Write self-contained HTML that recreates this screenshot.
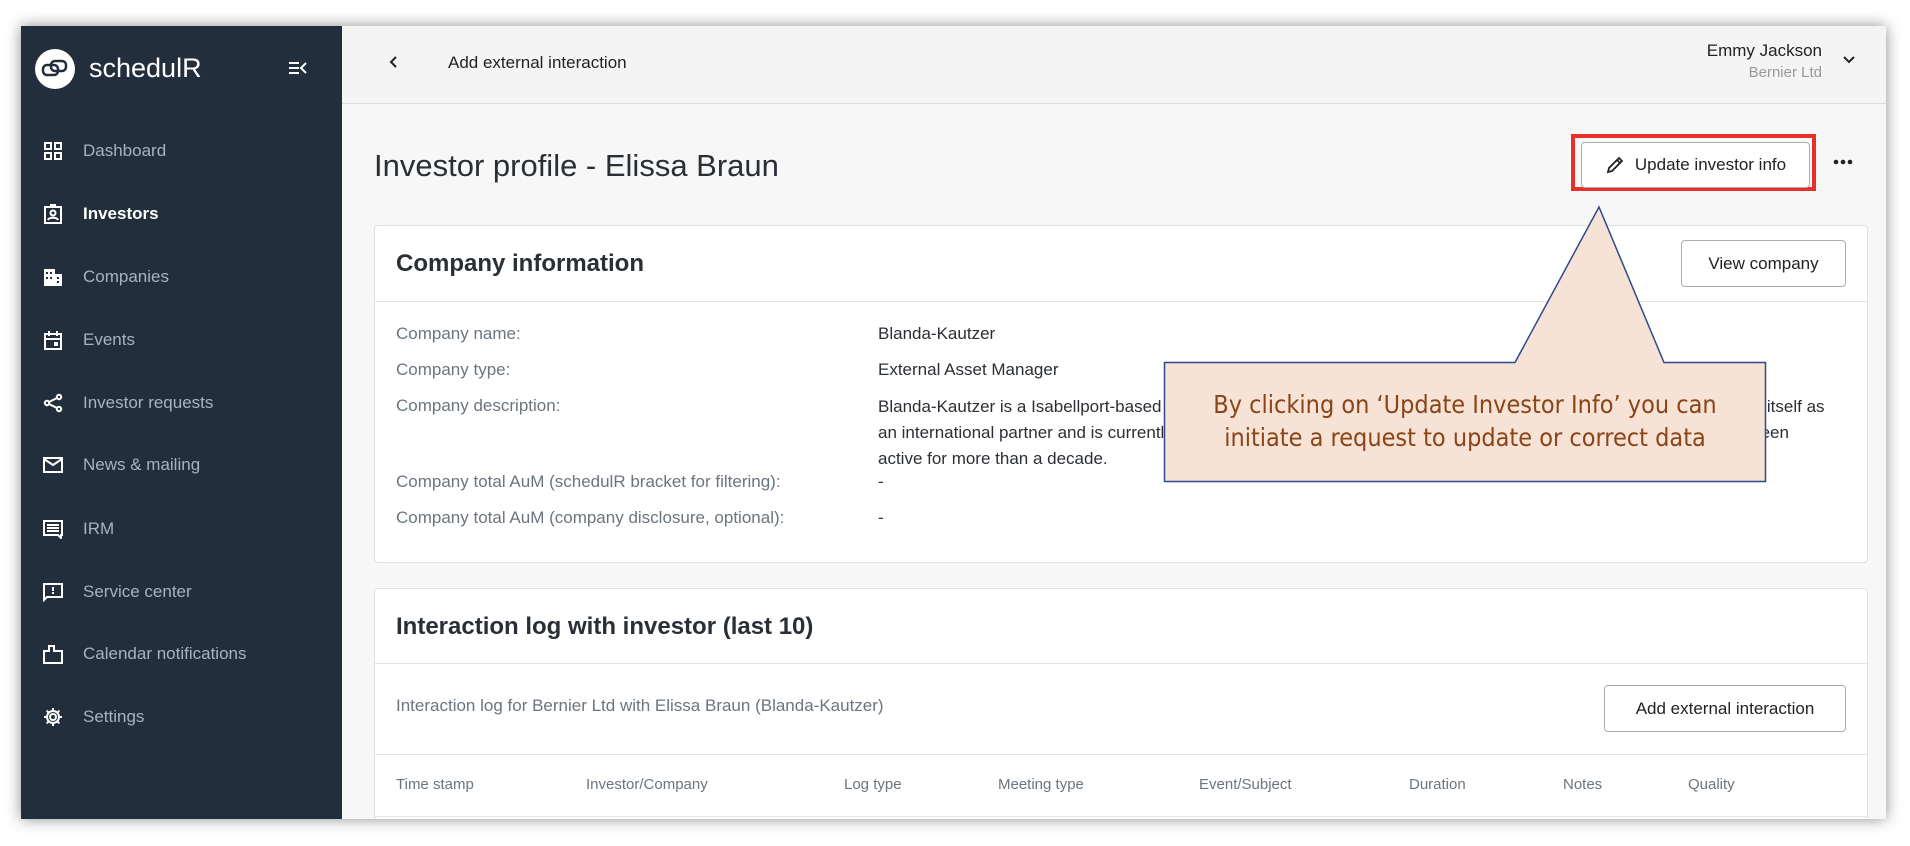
<!DOCTYPE html>
<html><head><meta charset="utf-8"><style>
*{box-sizing:border-box;margin:0;padding:0}
body{width:1910px;height:846px;background:#fff;font-family:"Liberation Sans",sans-serif;position:relative;overflow:hidden}
.win{position:absolute;left:21px;top:26px;width:1865px;height:793px;background:#f7f7f7;box-shadow:0 0 14px rgba(0,0,0,.45);overflow:hidden}
.side{position:absolute;left:0;top:0;width:321px;height:793px;background:#222e3c}
.a{position:absolute}
.mi{position:absolute;left:62px;font-size:17px;color:#a9b2bd}
.ic{position:absolute;left:22px;width:20px;height:20px}
.hdr{position:absolute;left:321px;top:0;right:0;height:78px;background:#f4f4f4;border-bottom:1px solid #dcdce0}
.card{position:absolute;background:#fff;border:1px solid #dfe1e4;border-radius:4px}
.lbl{position:absolute;left:21px;font-size:17px;color:#6c757d}
.val{position:absolute;left:503px;font-size:17px;color:#2b2f33}
.btn{position:absolute;border:1px solid #a9adb3;border-radius:4px;background:#fff;font-size:17px;color:#222;display:flex;align-items:center;justify-content:center}
.th{position:absolute;top:187px;font-size:15px;color:#6c757d}
</style></head><body>
<div class="win">
 <div class="side">
  <div class="a" style="left:14px;top:23px;width:40px;height:40px;border-radius:50%;background:#fff"></div>
  <svg class="a" style="left:20px;top:32px" width="28" height="22" viewBox="0 0 28 22"><rect x="2" y="7" width="15" height="10" rx="4" fill="none" stroke="#222e3c" stroke-width="2.5"/><rect x="10" y="3" width="15" height="10" rx="4" fill="none" stroke="#222e3c" stroke-width="2.5"/></svg>
  <div class="a" style="left:68px;top:27px;font-size:27px;color:#fff;">schedulR</div>
  <svg class="a" style="left:267px;top:34px" width="20" height="16" viewBox="0 0 20 16"><path d="M1 3h10M1 8h10M1 13h10M18 3l-5 5 5 5" stroke="#fff" stroke-width="2" fill="none"/></svg>
  <svg class="ic" style="top:115px" viewBox="0 0 20 20"><g fill="none" stroke="#fff" stroke-width="2"><rect x="2" y="2" width="6" height="6"/><rect x="12" y="2" width="6" height="6"/><rect x="2" y="12" width="6" height="6"/><rect x="12" y="12" width="6" height="6"/></g></svg>
  <div class="mi" style="top:115px">Dashboard</div>
  <svg class="ic" style="top:178px" viewBox="0 0 20 20"><g fill="none" stroke="#fff" stroke-width="2"><rect x="2" y="3" width="16" height="16"/><circle cx="10" cy="9" r="2.5"/><path d="M5 16c1-3 9-3 10 0M7 1h6"/></g></svg>
  <div class="mi" style="top:178px;color:#fff;font-weight:bold">Investors</div>
  <svg class="ic" style="top:241px" viewBox="0 0 20 20"><g fill="#fff"><rect x="1" y="2" width="11" height="17"/><rect x="12" y="7" width="7" height="12"/></g><g fill="#222e3c"><rect x="3" y="5" width="2" height="2"/><rect x="7" y="5" width="2" height="2"/><rect x="3" y="10" width="2" height="2"/><rect x="7" y="10" width="2" height="2"/><rect x="14" y="10" width="2" height="2"/><rect x="14" y="14" width="2" height="2"/></g></svg>
  <div class="mi" style="top:241px">Companies</div>
  <svg class="ic" style="top:304px" viewBox="0 0 20 20"><g fill="none" stroke="#fff" stroke-width="2"><rect x="2" y="4" width="16" height="15"/><path d="M6 1v5M14 1v5M2 9h16"/></g><rect x="11" y="12" width="4" height="4" fill="#fff"/></svg>
  <div class="mi" style="top:304px">Events</div>
  <svg class="ic" style="top:367px" viewBox="0 0 20 20"><g fill="none" stroke="#fff" stroke-width="2"><circle cx="16" cy="4" r="2.2"/><circle cx="4" cy="10" r="2.2"/><circle cx="16" cy="16" r="2.2"/><path d="M6 9l8-4M6 11l8 4"/></g></svg>
  <div class="mi" style="top:367px">Investor requests</div>
  <svg class="ic" style="top:429px" viewBox="0 0 20 20"><g fill="none" stroke="#fff" stroke-width="2"><rect x="1" y="3" width="18" height="14"/><path d="M1 4l9 6 9-6"/></g></svg>
  <div class="mi" style="top:429px">News &amp; mailing</div>
  <svg class="ic" style="top:493px" viewBox="0 0 20 20"><g fill="none" stroke="#fff" stroke-width="2"><path d="M1 2h18v14h-1v3l-3-3H1z"/><path d="M4 6h12M4 9h12M4 12h12"/></g></svg>
  <div class="mi" style="top:493px">IRM</div>
  <svg class="ic" style="top:556px" viewBox="0 0 20 20"><g fill="none" stroke="#fff" stroke-width="2"><path d="M1 2h18v13H4l-3 3z"/></g><rect x="9" y="5" width="2" height="4" fill="#fff"/><rect x="9" y="10" width="2" height="2" fill="#fff"/></svg>
  <div class="mi" style="top:556px">Service center</div>
  <svg class="ic" style="top:618px" viewBox="0 0 20 20"><g fill="none" stroke="#fff" stroke-width="2"><path d="M1 19V7h5V2h5v5h8v12z"/></g></svg>
  <div class="mi" style="top:618px">Calendar notifications</div>
  <svg class="ic" style="top:681px" viewBox="0 0 20 20"><g fill="none" stroke="#fff" stroke-width="2"><circle cx="10" cy="10" r="3"/><path d="M10 1v3M10 16v3M1 10h3M16 10h3M3.6 3.6l2.1 2.1M14.3 14.3l2.1 2.1M3.6 16.4l2.1-2.1M14.3 5.7l2.1-2.1"/><circle cx="10" cy="10" r="6"/></g></svg>
  <div class="mi" style="top:681px">Settings</div>
 </div>
 <div class="hdr">
  <svg class="a" style="left:46px;top:29px" width="12" height="14" viewBox="0 0 12 14"><path d="M8 2L3 7l5 5" stroke="#222" stroke-width="2" fill="none"/></svg>
  <div class="a" style="left:106px;top:27px;font-size:17px;color:#222">Add external interaction</div>
  <div class="a" style="right:64px;top:15px;font-size:17px;color:#222">Emmy Jackson</div>
  <div class="a" style="right:64px;top:38px;font-size:15px;color:#999">Bernier Ltd</div>
  <svg class="a" style="right:30px;top:29px" width="14" height="10" viewBox="0 0 14 10"><path d="M2 2l5 5 5-5" stroke="#222" stroke-width="2" fill="none"/></svg>
 </div>
 <div class="a" style="left:353px;top:122px;font-size:31px;color:#2a2f35">Investor profile - Elissa Braun</div>
 <div class="a" style="left:1550px;top:108px;width:245px;height:57px;border:4px solid #e8302a"></div>
 <div class="btn" style="left:1560px;top:116px;width:229px;height:46px"><svg width="20" height="20" viewBox="0 0 20 20" style="margin-right:10px"><path d="M3 17l1-4L14 3l3 3L7 16zM12 5l3 3" stroke="#222" stroke-width="1.8" fill="none"/></svg>Update investor info</div>
 <svg class="a" style="left:1812px;top:132px" width="20" height="8" viewBox="0 0 20 8"><circle cx="3" cy="4" r="2.3" fill="#222"/><circle cx="10" cy="4" r="2.3" fill="#222"/><circle cx="17" cy="4" r="2.3" fill="#222"/></svg>
 <div class="card" style="left:353px;top:199px;width:1494px;height:338px">
  <div class="a" style="left:21px;top:24px;font-size:24px;color:#2a2f35;font-weight:bold">Company information</div>
  <div class="btn" style="left:1306px;top:14px;width:165px;height:47px">View company</div>
  <div class="a" style="left:0;right:0;top:75px;border-top:1px solid #e3e5e8"></div>
  <div class="lbl" style="top:98px">Company name:</div><div class="val" style="top:98px">Blanda-Kautzer</div>
  <div class="lbl" style="top:134px">Company type:</div><div class="val" style="top:134px">External Asset Manager</div>
  <div class="lbl" style="top:170px">Company description:</div>
  <div class="val" style="top:168px;line-height:26px;width:960px">Blanda-Kautzer is a Isabellport-based asset manager with a focus on renewable energy investors. The company sees itself as an international partner and is currently invested in one or more projects, for example in the North Sea, where it has been active for more than a decade.</div>
  <div class="lbl" style="top:246px">Company total AuM (schedulR bracket for filtering):</div><div class="val" style="top:246px">-</div>
  <div class="lbl" style="top:282px">Company total AuM (company disclosure, optional):</div><div class="val" style="top:282px">-</div>
 </div>
 <div class="card" style="left:353px;top:562px;width:1494px;height:260px">
  <div class="a" style="left:21px;top:24px;font-size:24px;color:#2a2f35;font-weight:bold">Interaction log with investor (last 10)</div>
  <div class="a" style="left:0;right:0;top:74px;border-top:1px solid #e3e5e8"></div>
  <div class="a" style="left:21px;top:107px;font-size:17px;color:#6c757d">Interaction log for Bernier Ltd with Elissa Braun (Blanda-Kautzer)</div>
  <div class="btn" style="left:1229px;top:96px;width:242px;height:47px">Add external interaction</div>
  <div class="a" style="left:0;right:0;top:165px;border-top:1px solid #e3e5e8"></div>
  <div class="th" style="left:21px">Time stamp</div><div class="th" style="left:211px">Investor/Company</div><div class="th" style="left:469px">Log type</div><div class="th" style="left:623px">Meeting type</div><div class="th" style="left:824px">Event/Subject</div><div class="th" style="left:1034px">Duration</div><div class="th" style="left:1188px">Notes</div><div class="th" style="left:1313px">Quality</div>
  <div class="a" style="left:0;right:0;top:227px;border-top:1px solid #e3e5e8"></div>
 </div>
</div>
<svg class="a" style="left:0;top:0" width="1910" height="846">
 <path d="M1164.5 362.5H1515L1599 207L1664 362.5H1765.5V481.5H1164.5Z" fill="#f7e3d5" stroke="#2f4a8c" stroke-width="1.5"/>
</svg>
<div class="a" style="left:1165px;top:388px;width:600px;text-align:center;font-size:25px;line-height:33px;color:#8a4418;font-family:'DejaVu Sans Condensed','Liberation Sans Narrow','Liberation Sans',sans-serif">By clicking on ‘Update Investor Info’ you can<br>initiate a request to update or correct data</div>
</body></html>
